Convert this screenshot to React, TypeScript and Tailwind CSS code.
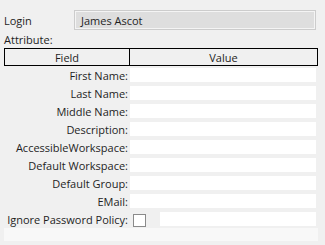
const fields = [
  'First Name:',
  'Last Name:',
  'Middle Name:',
  'Description:',
  'AccessibleWorkspace:',
  'Default Workspace:',
  'Default Group:',
  'EMail:',
]

const App = () => {
  return (
    <div className="h-[245px] w-[325px] overflow-hidden bg-[#f0f0f0] pl-[4px] pt-[10px] font-['Open_Sans',sans-serif] text-[11px] text-[#1e1e1e]">
      <div className="flex h-[20px] items-center">
        <div className="w-[70px] leading-none">Login</div>
        <div className="flex h-[20px] w-[242px] items-center border border-[#cccccc] bg-[#dedede] pl-[6px] leading-none shadow-[inset_0_0_0_1px_#f4f4f4]">
          James Ascot
        </div>
      </div>
      <div className="flex h-[18px] items-center leading-none">Attribute:</div>
      <div className="flex h-[18px] w-[314px] border border-black leading-none">
        <div className="flex w-[125px] items-center justify-center border-r border-black">Field</div>
        <div className="flex flex-1 items-center justify-center">Value</div>
      </div>
      <div className="mt-[2px] flex flex-col gap-[4px]">
        {fields.map((f) => (
          <div key={f} className="flex h-[14px] items-center">
            <div className="w-[126px] whitespace-nowrap pr-[2px] text-right leading-none">{f}</div>
            <div className="h-[14px] w-[186px] bg-white" />
          </div>
        ))}
        <div className="flex h-[14px] items-center">
          <div className="w-[126px] whitespace-nowrap pr-[2px] text-right leading-none">Ignore Password Policy:</div>
          <div className="ml-[3px] mt-[2px] h-[13px] w-[13px] border border-[#8a8a8a] bg-white" />
          <div className="ml-[14px] h-[14px] w-[156px] bg-white" />
        </div>
      </div>
      <div className="mt-[2px] h-[13px] w-[314px] bg-[#f8f8f8]" />
    </div>
  )
}

export default App
